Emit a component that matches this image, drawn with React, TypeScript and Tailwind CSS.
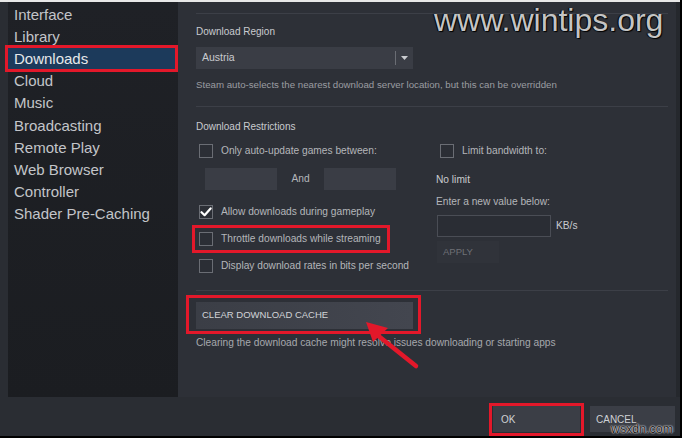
import React from "react";

const font = { fontFamily: '"Liberation Sans", Arial, sans-serif' };

const navItems = [
  "Interface",
  "Library",
  "Downloads",
  "Cloud",
  "Music",
  "Broadcasting",
  "Remote Play",
  "Web Browser",
  "Controller",
  "Shader Pre-Caching",
];

function Checkbox({ checked = false }: { checked?: boolean }) {
  return (
    <div className="w-[14px] h-[14px] border border-[#6a6d74] bg-[#2b2e35] flex items-center justify-center shrink-0">
      {checked && (
        <svg width="12" height="12" viewBox="0 0 12 12">
          <path d="M1.5 6.2 L4.6 9.2 L10.6 2.4" stroke="#ffffff" strokeWidth="2.2" fill="none" strokeLinecap="round" strokeLinejoin="round" />
        </svg>
      )}
    </div>
  );
}

function CheckRow({ label, checked = false }: { label: string; checked?: boolean }) {
  return (
    <div className="flex items-center h-[14px] pl-[3px]">
      <Checkbox checked={checked} />
      <span className="ml-[8px] text-[10.2px] text-[#b4b6ba] whitespace-nowrap">{label}</span>
    </div>
  );
}

function Divider() {
  return <div className="h-px bg-[#3c3f47] mr-[8px]" />;
}

export default function App() {
  return (
    <div className="w-[682px] h-[438px] bg-black overflow-hidden" style={font}>
      <div className="relative w-[680px] h-[436px] bg-[#2a2d33] flex flex-col">
        {/* top highlight edge */}
        <div className="h-[2px] bg-[#e8e8e8] shrink-0" />
        <div className="flex h-[395px] shrink-0">
          {/* sidebar */}
          <div className="ml-[8px] w-[170px] h-full bg-gradient-to-b from-[#1f2126] to-[#1b1d21] pt-px">
            {navItems.map((item) => {
              const active = item === "Downloads";
              return (
                <div key={item} className="relative h-[22.2px] flex items-center">
                  {active && (
                    <>
                      <div className="absolute left-0 right-[2px] top-[1px] bottom-[1px] bg-[#1c3a5b]" />
                      <div className="absolute left-[-3px] right-0 top-[-2px] bottom-[-2px] border-[3px] border-[#e3182a]" />
                    </>
                  )}
                  <span className={`relative pl-[6px] text-[15px] leading-none ${active ? "text-[#e6e8ea]" : "text-[#c3c5c9]"}`}>
                    {item}
                  </span>
                </div>
              );
            })}
          </div>
          {/* settings panel */}
          <div className="relative flex-1 h-full bg-[#2d3037] pl-[18px] pt-[11px]">
            <Divider />
            <div className="mt-[12px] text-[10px] leading-[12px] text-[#c9cbcf]">Download Region</div>
            <div className="mt-[9px] w-[217px] h-[22px] bg-[#3a3d45] flex items-center">
              <span className="pl-[6px] flex-1 text-[10.5px] text-[#c9cbcf]">Austria</span>
              <div className="w-px h-[14px] bg-[#6a6d74]" />
              <div className="w-[17px] flex justify-center">
                <svg width="7" height="4" viewBox="0 0 7 4">
                  <path d="M0 0 H7 L3.5 4 Z" fill="#c9cbcf" />
                </svg>
              </div>
            </div>
            <div className="mt-[10px] text-[9.7px] leading-[12px] text-[#9b9da2] whitespace-nowrap">
              Steam auto-selects the nearest download server location, but this can be overridden
            </div>
            <div className="mt-[15px]">
              <Divider />
            </div>
            <div className="mt-[14px] text-[10px] leading-[12px] text-[#c9cbcf]">Download Restrictions</div>

            <div className="flex mt-[10px]">
              {/* left column */}
              <div className="w-[240px]">
                <div className="mt-[1px]">
                  <CheckRow label="Only auto-update games between:" />
                </div>
                <div className="mt-[10px] flex items-center pl-[9px]">
                  <div className="w-[72px] h-[22px] bg-[#3a3d45]" />
                  <span className="w-[47px] text-center text-[10.2px] text-[#b4b6ba]">And</span>
                  <div className="w-[72px] h-[22px] bg-[#3a3d45]" />
                </div>
                <div className="mt-[15px]">
                  <CheckRow label="Allow downloads during gameplay" checked />
                </div>
                <div className="relative mt-[13px]">
                  <div className="absolute left-[-4px] top-[-7px] w-[198px] h-[28px] border-[3px] border-[#e3182a]" />
                  <CheckRow label="Throttle downloads while streaming" />
                </div>
                <div className="mt-[13px]">
                  <CheckRow label="Display download rates in bits per second" />
                </div>
              </div>
              {/* right column */}
              <div className="ml-[1px] flex-1">
                <div className="mt-[1px]">
                  <CheckRow label="Limit bandwidth to:" />
                </div>
                <div className="mt-[16px] -ml-[1px] text-[10.2px] leading-[12px] text-[#c9cbcf]">No limit</div>
                <div className="mt-[10px] -ml-[1px] text-[10.2px] leading-[12px] text-[#b4b6ba]">Enter a new value below:</div>
                <div className="mt-[7px] flex items-center">
                  <div className="w-[114px] h-[22px] bg-[#2a2d34] border border-[#4a4d55]" />
                  <span className="ml-[5px] text-[10.2px] text-[#c9cbcf]">KB/s</span>
                </div>
                <div className="mt-[4px] w-[62px] h-[22px] bg-[#30333a] flex items-center pl-[6px] text-[9.5px] text-[#6e7076]">
                  APPLY
                </div>
              </div>
            </div>

            <div className="mt-[17px]">
              <Divider />
            </div>
            <div className="relative mt-[11px] w-[217px] h-[27px] bg-gradient-to-r from-[#3b3e46] to-[#43464f] flex items-center pl-[6px] text-[9.5px] text-[#d2d4d8]">
              <div className="absolute left-[-10px] top-[-7px] w-[235px] h-[39px] border-[3px] border-[#e3182a]" />
              <span className="relative">CLEAR DOWNLOAD CACHE</span>
            </div>
            <div className="mt-[8px] text-[10.2px] leading-[12px] text-[#a6a8ad] whitespace-nowrap">
              Clearing the download cache might resolve issues downloading or starting apps
            </div>

            {/* annotation arrow */}
            <svg className="absolute left-[180px] top-[310px]" width="64" height="62" viewBox="0 0 64 62">
              <path d="M58 54 L18 22" stroke="#e3182a" strokeWidth="4.5" strokeLinecap="round" />
              <path d="M8 10 L30 16 L15 30 Z" fill="#e3182a" />
            </svg>

            {/* site watermark */}
            <div
              className="absolute left-[256px] top-[1px] text-[32px] leading-[35px] text-[#c4c4c4] whitespace-nowrap"
              style={{ textShadow: "1px 1px 1px #000, -1px 0 1px #000" }}
            >
              www.wintips.org
            </div>
          </div>
          <div className="w-[4px] h-full bg-[#25282d]" />
        </div>
        {/* footer */}
        <div className="relative flex-1 flex items-start pt-[9px] pl-[493px] gap-[10px]">
          <div className="relative w-[87px] h-[26px] bg-[#3b3e46] flex items-center pl-[8px] text-[10px] text-[#cfd1d5]">
            <div className="absolute left-[-4px] top-[-3px] w-[95px] h-[33px] border-[3px] border-[#e3182a]" />
            <span className="relative">OK</span>
          </div>
          <div className="w-[85px] h-[26px] bg-[#3b3e46] flex items-center pl-[6px] text-[10px] text-[#cfd1d5]">
            CANCEL
          </div>
          <div
            className="absolute left-[611px] top-[25px] text-[12.4px] leading-[14px] text-[#1c1c1c]"
            style={{ textShadow: "0 0 2px #fff, 0 0 1px #fff" }}
          >
            wsxdn.com
          </div>
        </div>
      </div>
    </div>
  );
}
